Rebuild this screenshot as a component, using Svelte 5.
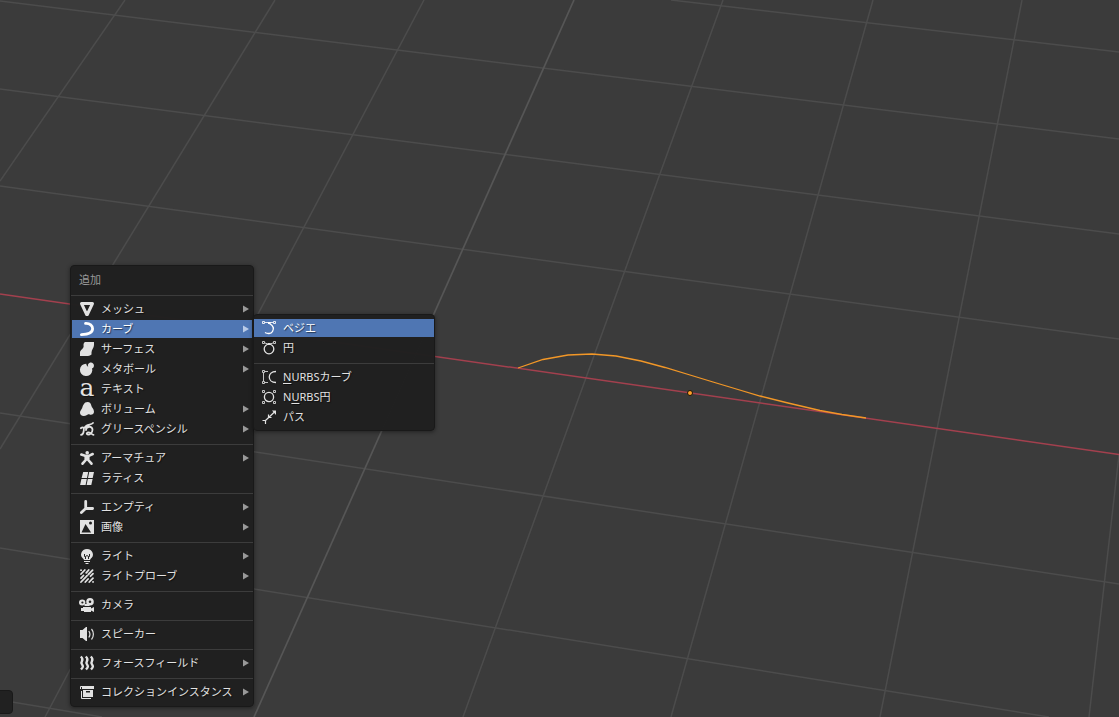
<script>
  const menuGroups = [
    [
      { label: 'メッシュ', icon: 'mesh', sub: true },
      { label: 'カーブ', icon: 'curve', sub: true, open: true },
      { label: 'サーフェス', icon: 'surface', sub: true },
      { label: 'メタボール', icon: 'meta', sub: true },
      { label: 'テキスト', icon: 'text' },
      { label: 'ボリューム', icon: 'volume', sub: true },
      { label: 'グリースペンシル', icon: 'grease', sub: true }
    ],
    [
      { label: 'アーマチュア', icon: 'armature', sub: true },
      { label: 'ラティス', icon: 'lattice' }
    ],
    [
      { label: 'エンプティ', icon: 'empty', sub: true },
      { label: '画像', icon: 'image', sub: true }
    ],
    [
      { label: 'ライト', icon: 'light', sub: true },
      { label: 'ライトプローブ', icon: 'probe', sub: true }
    ],
    [{ label: 'カメラ', icon: 'camera' }],
    [{ label: 'スピーカー', icon: 'speaker' }],
    [{ label: 'フォースフィールド', icon: 'force', sub: true }],
    [{ label: 'コレクションインスタンス', icon: 'collection', sub: true }]
  ];

  const curveGroups = [
    [
      { label: 'ベジエ', icon: 'bezier', active: true },
      { label: '円', icon: 'circle' }
    ],
    [
      { pre: '', key: 'N', label: 'URBSカーブ', icon: 'nurbs' },
      { pre: 'N', key: 'U', label: 'RBS円', icon: 'nurbsCircle' },
      { label: 'パス', icon: 'path' }
    ]
  ];

  const gridLines = [
    [671, 0, 1119, 52],
    [0, 1, 1119, 139],
    [0, 89, 1119, 234],
    [0, 186, 1119, 339],
    [0, 413, 1119, 584],
    [0, 548, 1049, 717],
    [0, 700, 102, 717],
    [125, 0, 0, 181],
    [275, 0, 0, 449],
    [424, 0, 45, 717],
    [723, 0, 463, 717],
    [873, 0, 671, 717],
    [1022, 0, 880, 717],
    [1119, 455, 1089, 717]
  ];
</script>

{#snippet icon(name)}
  <svg class="icon" viewBox="0 0 16 16" aria-hidden="true">
    {#if name === 'mesh'}
      <path class="line" stroke-width="3" stroke-linejoin="round" d="M2.5 2.5h11L8.300 13.5h-.6z" />
    {:else if name === 'curve'}
      <path class="line" stroke-width="2.8" stroke-linecap="round" d="M6.5 2.4C11 2.2 13.6 4.6 13.6 7.8S10.500 13.400 2.4 13.600" />
    {:else if name === 'surface'}
      <path d="M6 1h9v3c0 3-2.500 4.500-2.500 7.500v2C11 15 9.500 15 7.500 15H1v-3.500c0-3 4.500-3.500 3.500-7.500C4.500 2.500 5 1.500 6 1z" />
    {:else if name === 'meta'}
      <path d="M7.300 2.700A6.200 6.200 0 1 0 13.300 9.500c0-.8-.1-1.400-.3-2A3.100 3.100 0 1 0 9 3.500c-.3 1-.1 1.700.3 2.200-1.300-.6-2-1.500-2-3z" />
    {:else if name === 'text'}
      <text x="8" y="15" text-anchor="middle">a</text>
    {:else if name === 'volume'}
      <path d="M8.500 1c2.400 0 3.500 1.600 3.800 3.600.3 1.900 2.700 3.600 2.700 6.100 0 2.100-1.500 3-3.200 3-1.200 0-1.500-.7-2.500-.4-1.300.4-2 1.700-4.500 1.700C2.300 15 1 13.600 1 11.600c0-2 1.600-3 2.200-4.600C4 4.700 5 1 8.500 1z" />
    {:else if name === 'grease'}
      <path class="line" stroke-width="1.800" stroke-linecap="round" d="M14 2C12 4.200 7.500 2.800 5.800 6.500M1.800 7.200C3.800 5.500 5.300 6.500 4.800 9.500 4.500 12 4.400 13.800 2 13.800M7 9C7 4.800 13.500 4.600 13.500 8.800c0 3.200-3 5.200-5 4.700-1.500-.6-.5-2.800 2-2 1.500.5 2.500 2.300 4 2.300" />
    {:else if name === 'armature'}
      <circle cx="8.200" cy="2.800" r="1.800" />
      <path class="line" stroke-width="2.600" stroke-linecap="round" d="M2.300 4.600 6 5.800h4l3.700-1.800M7 6l-.3 4L3.500 13.700M9 6l.3 4 3.200 3.700" />
      <path d="M5.500 5h5l-.5 6-2-1-2 1z" />
    {:else if name === 'lattice'}
      <path d="M4.200 2h5L8 8H2.600zM10.200 2H15l-1.300 6H9zM2.400 9h5.400l-1.200 6H1.100zM8.800 9h4.800l-1.300 6H7.600z" />
    {:else if name === 'empty'}
      <path class="line" stroke-width="2.800" stroke-linecap="round" d="M6.700 2.400v7.100L2.400 13.500M6.700 9.500h6.900" />
    {:else if name === 'image'}
      <path fill-rule="evenodd" d="M1 1h14v14H1zM2.500 13.500h9.600L6.500 5zM11.500 2.500a1.500 1.500 0 1 0 0 3 1.500 1.500 0 0 0 0-3z" />
    {:else if name === 'light'}
      <path d="M8 1a6 5.500 0 0 0-3.500 9.900L5 12h6l.5-1.100A6 5.500 0 0 0 8 1z" />
      <path class="hole" stroke-width="1" d="M5.500 6v2.500h1V11M10.500 6v2.500h-1V11M6.500 8.500l1.500-1 1.500 1" />
      <path d="M5 13h6v1H5zM6.500 15h3v1h-3z" />
    {:else if name === 'probe'}
      <path class="line" stroke-width="1.800" stroke-linecap="round" d="M2 2.200h.1M2 6l3.800-4M2 10.200l2.500-2.700M7.200 4.800 9.700 2M2 14l5-5.200M9.300 6.500l4.300-4.400M6.300 14l2.800-3M11.500 8.200 14 5.700M10.300 14l3.700-3.900M14 13.900h.1M7.700 7.800h.4" />
    {:else if name === 'camera'}
      <path fill-rule="evenodd" d="M3.200 2.500a3.200 3 0 1 1 0 6 3.200 3 0 0 1 0-6zM3.400 4.400a1.100 1.100 0 1 0 0 2.200 1.100 1.100 0 0 0 0-2.200zM11 1a3.800 3.800 0 1 1 0 7.600A3.800 3.800 0 0 1 11 1zM11 3.400a1.300 1.300 0 1 0 0 2.600 1.300 1.300 0 0 0 0-2.600z" />
      <path d="M5.500 7h5v2h-5zM4 10h8v1.500l3-1.500v5l-3-1.500V15H5v-1H2v-3h2z" />
    {:else if name === 'speaker'}
      <path d="M1 4h2.500L7 1h1v14H7l-3.500-3H1z" />
      <path class="line" stroke-width="1.200" d="M9.800 5c1.400 2 1.400 4.500 0 6.500M12.500 3c2.500 3 2.500 7.500 0 10.500" />
    {:else if name === 'force'}
      <path class="line" stroke-width="2.400" d="M1.800 1.500C6 5.500 1 6 2.800 9c1.200 2 2 2.500-.8 5.500M6.800 1.500C11 5.500 6 6 7.800 9c1.200 2 2 2.500-.8 5.500M11.800 1.500C16 5.500 11 6 12.800 9c1.200 2 2 2.500-.8 5.500" />
    {:else if name === 'collection'}
      <path fill-rule="evenodd" d="M3 2h12v3H3zM4 6h10v7H4zM7 7v1.500h4V7z" />
      <path class="line" stroke-width="1" d="M1.500 5V2.500H3M2.500 7v7.500H12" />
    {:else if name === 'bezier'}
      <path class="line" stroke-width="1" d="M.5 1.500h2v2h-2zM11.500 1.500h2v2h-2zM3 2.500h8" opacity=".85" />
      <path d="M6 2h2.500v2H6z" />
      <path class="line" stroke-width="1.400" d="M7.500 3.500C12 6 12 9 10.500 11.500 9 14 5.500 14 3 12.500" />
    {:else if name === 'circle'}
      <path class="line" stroke-width="1" d="M.5 1.500h2v2h-2zM11.500 1.500h2v2h-2zM3 3l3 1M11 3 8 4" opacity=".85" />
      <path d="M6 3h2.500v2H6z" />
      <circle class="line" stroke-width="1.300" cx="7" cy="9" r="4.800" />
    {:else if name === 'nurbs'}
      <path class="line" stroke-width="1" d="M.5 1.500h2v2h-2zM.5 12.500h2v2h-2zM1.500 4v8M3 2.500h3M3 13.500h3" opacity=".85" />
      <path class="line" stroke-width="1.300" d="M14 2.500C5 2.500 5 13.500 14 13.500" />
    {:else if name === 'nurbsCircle'}
      <path class="line" stroke-width="1" d="M.5 1.500h2v2h-2zM11.500 1.500h2v2h-2zM.5 12.500h2v2h-2zM11.500 12.500h2v2h-2z" opacity=".85" />
      <circle class="line" stroke-width="1.300" cx="7" cy="8" r="4.600" />
    {:else if name === 'path'}
      <path class="line" stroke-width="1.200" d="M3.500 11.500 13 2.500M.5 11.500h3V15M6.500 5.500v3h3" />
      <path d="M10 1.500h4V6z" />
    {/if}
  </svg>
{/snippet}

<main class="viewport">
  <svg class="scene" viewBox="0 0 1119 717" preserveAspectRatio="xMinYMin slice" aria-hidden="true">
    {#each gridLines as [x1, y1, x2, y2]}
      <line class="grid" {x1} {y1} {x2} {y2} />
    {/each}
    <line class="grid major" x1="574" y1="0" x2="254" y2="717" />
    <line class="axis" x1="0" y1="294" x2="1119" y2="454.500" />
    <polyline class="object" points="518,368 543,359.500 568,355 592,354 616,356 641,361 665,367.500 690,375 713,382 738,389.500 760,396 788,403 820,410.500 842,414.500 866,418" />
    <circle class="origin" cx="690" cy="393" r="2.500" />
  </svg>

  <nav class="menu main-menu" aria-label="追加">
    <h2>追加</h2>
    {#each menuGroups as group}
      <ul>
        {#each group as item}
          <li>
            <button class:active={item.open} aria-haspopup={item.sub ? 'menu' : undefined} aria-expanded={item.sub ? !!item.open : undefined}>
              {@render icon(item.icon)}
              <span class="label">{item.label}</span>
              {#if item.sub}
                <svg class="arrow" viewBox="0 0 6 8" aria-hidden="true"><path d="M0 .5v7L6 4z" /></svg>
              {/if}
            </button>
            {#if item.open}
              <div class="menu submenu">
                {#each curveGroups as subGroup}
                  <ul>
                    {#each subGroup as entry}
                      <li>
                        <button class:active={entry.active}>
                          {@render icon(entry.icon)}
                          <span class="label">{#if entry.key}{entry.pre}<u>{entry.key}</u>{/if}{entry.label}</span>
                        </button>
                      </li>
                    {/each}
                  </ul>
                {/each}
              </div>
            {/if}
          </li>
        {/each}
      </ul>
    {/each}
  </nav>

  <div class="panel-edge"></div>
</main>

<style>
  :global(body) {
    margin: 0;
    background: #3b3b3b;
  }

  .viewport {
    position: relative;
    min-height: 100vh;
    overflow: hidden;
    background: #3b3b3b;
    color: #e2e2e2;
    font: 11px/18px 'Noto Sans', 'Noto Sans CJK JP', sans-serif;
  }

  .scene {
    position: absolute;
    inset: 0;
    width: 100%;
    height: 100%;
    fill: none;
  }

  .grid {
    stroke: #4c4c4c;
    stroke-width: 1.5;
  }

  .major {
    stroke: #565656;
    stroke-width: 1.7;
  }

  .axis {
    stroke: #a3404e;
    stroke-width: 1.5;
  }

  .object {
    stroke: #f29727;
    stroke-width: 1.3;
  }

  .origin {
    fill: #ffa028;
    stroke: #1c1408;
    stroke-width: 1;
  }

  .menu {
    position: absolute;
    box-sizing: border-box;
    border: 1px solid #191919;
    border-radius: 4px;
    background: rgb(32 32 32 / 98%);
    box-shadow: 0 1px 4px rgb(0 0 0 / 45%);
  }

  .main-menu {
    top: 265px;
    left: 70px;
    width: 184px;
    padding-bottom: 4px;
  }

  .submenu {
    top: -5px;
    left: 100%;
    z-index: 1;
    width: 182px;
    padding: 3px 0;
  }

  h2 {
    margin: 0;
    padding: 5px 8px 6px;
    color: #989898;
    font-size: 11px;
    font-weight: 400;
    line-height: 18px;
  }

  ul {
    margin: 0;
    padding: 0;
    list-style: none;
  }

  h2 + ul,
  ul + ul {
    border-top: 1px solid #3c3c3c;
    padding-top: 3px;
  }

  ul + ul {
    margin-top: 5px;
  }

  li {
    position: relative;
    padding: 1px;
  }

  .submenu li {
    padding: 1px 0;
  }

  button {
    display: flex;
    align-items: center;
    box-sizing: border-box;
    width: 100%;
    height: 18px;
    border: 0;
    padding: 0 3px 0 7px;
    background: none;
    color: inherit;
    font: inherit;
    text-align: left;
    text-shadow: 1px 1px 1px rgb(0 0 0 / 55%);
  }

  .submenu button {
    padding-left: 8px;
  }

  button:hover,
  .active {
    background: #4f76b3;
    color: #fff;
  }

  .icon {
    flex: none;
    width: 16px;
    height: 16px;
    margin-right: 6px;
    overflow: visible;
    fill: currentColor;
    stroke: none;
  }

  .submenu .icon {
    margin-right: 5px;
  }

  .icon .line {
    fill: none;
    stroke: currentColor;
  }

  .icon .hole {
    fill: none;
    stroke: #212121;
  }

  .icon text {
    font: 25px 'DejaVu Serif', serif;
  }

  .label {
    flex: 1;
    white-space: nowrap;
  }

  u {
    text-underline-offset: 2px;
  }

  .arrow {
    width: 6px;
    height: 8px;
    fill: #999;
  }

  .active .arrow {
    fill: #b9cbe8;
  }

  .panel-edge {
    position: absolute;
    top: 690px;
    left: -4px;
    box-sizing: border-box;
    width: 17px;
    height: 24px;
    border: 1px solid #191919;
    border-radius: 4px;
    background: #212121;
  }
</style>
